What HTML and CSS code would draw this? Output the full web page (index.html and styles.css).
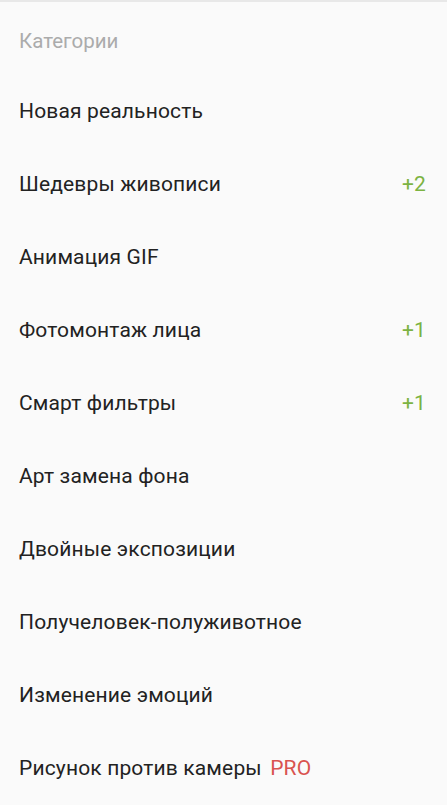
FILE: index.html
```html
<!DOCTYPE html>
<html lang="ru">

<head>
  <meta charset="UTF-8">
  <meta name="viewport" content="width=device-width, initial-scale=1.0">
  <title>Категории</title>
  <link rel="stylesheet" href="styles.css">
</head>

<body>
  <nav class="menu">
    <h2 class="menu-title">Категории</h2>
    <ul class="menu-list">
      <li class="menu-item"><span>Новая реальность</span></li>
      <li class="menu-item"><span>Шедевры живописи</span><span class="count">+2</span></li>
      <li class="menu-item"><span>Анимация GIF</span></li>
      <li class="menu-item"><span>Фотомонтаж лица</span><span class="count">+1</span></li>
      <li class="menu-item"><span>Смарт фильтры</span><span class="count">+1</span></li>
      <li class="menu-item"><span>Арт замена фона</span></li>
      <li class="menu-item"><span>Двойные экспозиции</span></li>
      <li class="menu-item"><span>Получеловек-полуживотное</span></li>
      <li class="menu-item"><span>Изменение эмоций</span></li>
      <li class="menu-item"><span>Рисунок против камеры <span class="pro">PRO</span></span></li>
    </ul>
  </nav>
</body>

</html>
```

FILE: styles.css
```css
body {
  margin: 0;
  font-family: Roboto, "Noto Sans", sans-serif;
  background: #fafafa;
  color: #222;
}

.menu {
  border-top: 2px solid #e8e8e8;
}

.menu-title {
  margin: 0;
  padding: 28px 19px 22px;
  font-size: 20.5px;
  line-height: 22px;
  font-weight: 400;
  color: #ababab;
}

.menu-list {
  list-style: none;
  margin: 0;
  padding: 0;
}

.menu-item {
  display: flex;
  justify-content: space-between;
  align-items: center;
  height: 73px;
  padding: 0 21px 0 19px;
  font-size: 21px;
  letter-spacing: 0.15px;
}

.count {
  color: #7cb342;
}

.pro {
  margin-left: 3px;
  color: #d9534f;
}
```
